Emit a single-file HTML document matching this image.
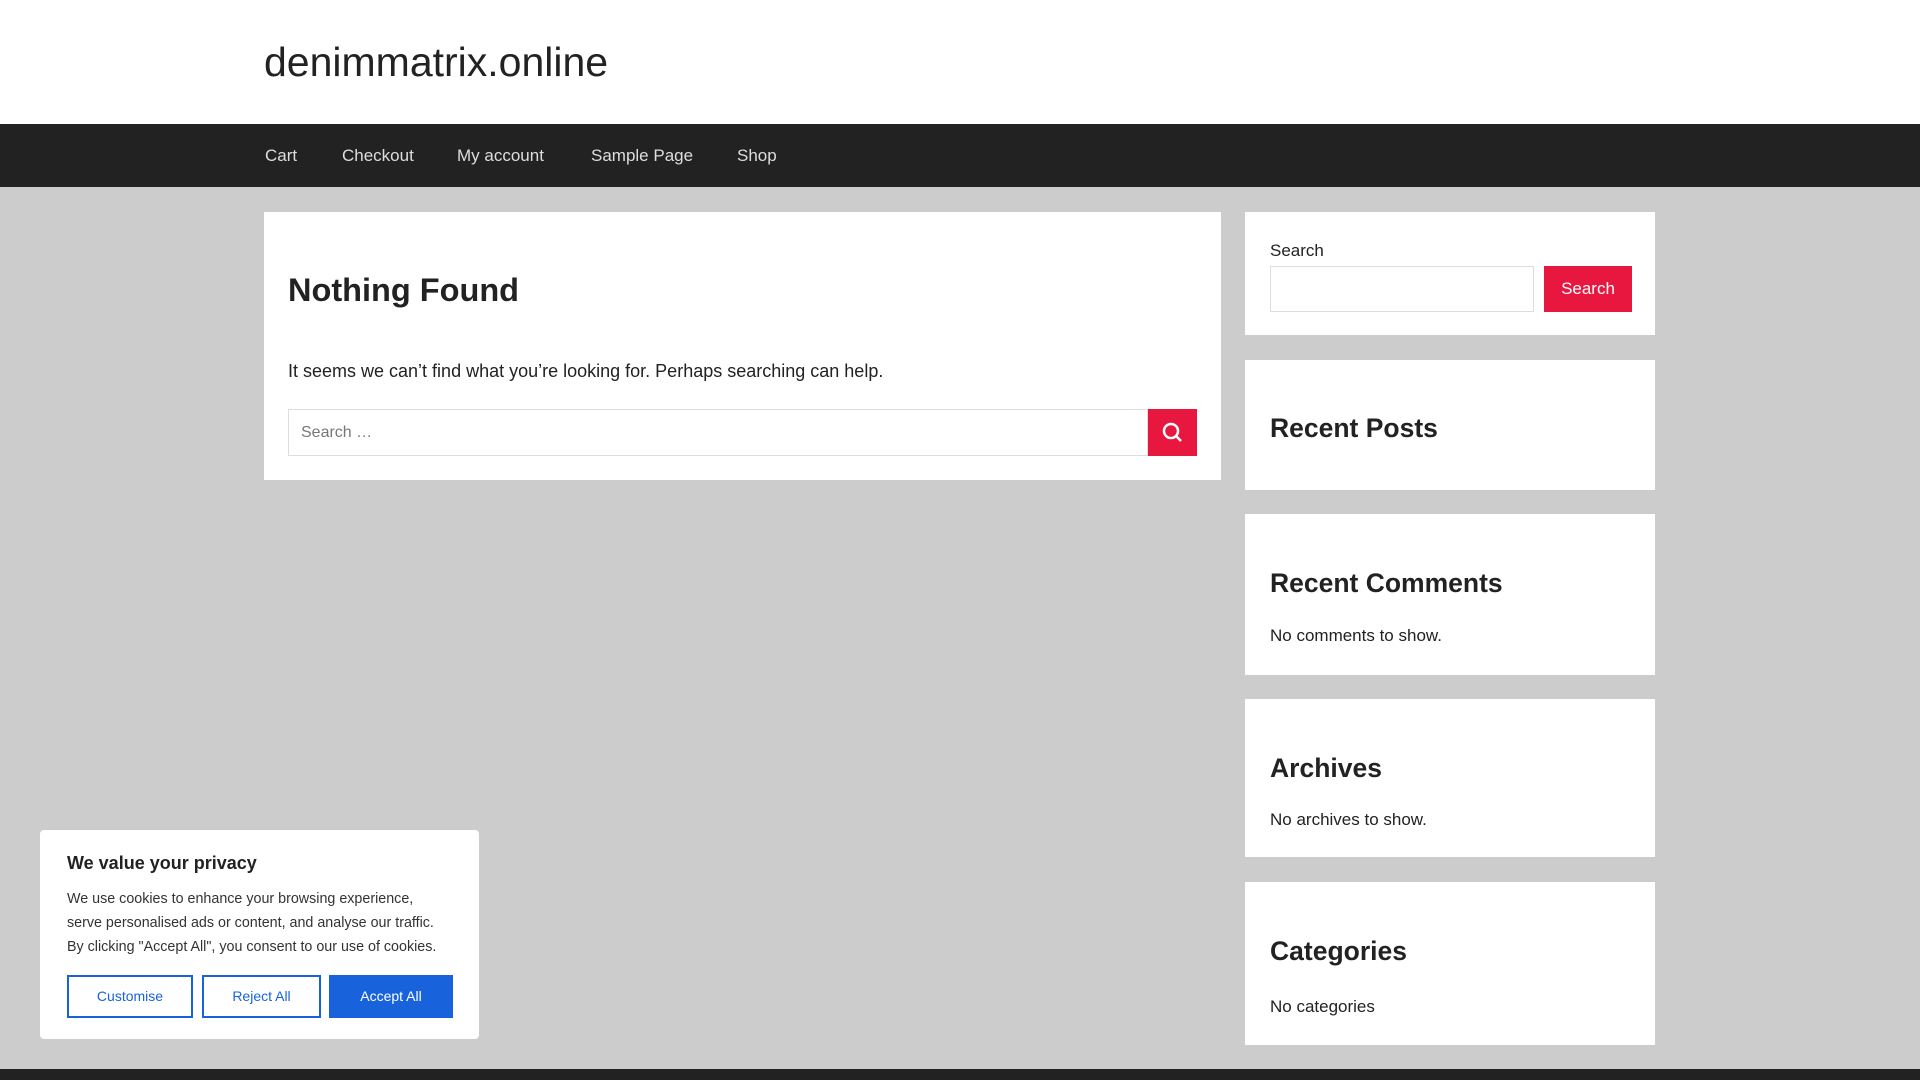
<!DOCTYPE html>
<html><head><meta charset="utf-8"><style>
*{box-sizing:border-box;margin:0;padding:0}
body{width:1920px;height:1080px;overflow:hidden;background:#ccc;font-family:"Liberation Sans",sans-serif;color:#222;position:relative}
.hdr{position:absolute;left:0;top:0;width:1920px;height:124px;background:#fff}
.title{position:absolute;left:264px;top:39px;font-size:41px;color:#222}
.nav{position:absolute;left:0;top:124px;width:1920px;height:63px;background:#222}
.nav span{position:absolute;top:22px;color:#ddd;font-size:17px}
.box{position:absolute;background:#fff}
h1{position:absolute;left:288px;top:272px;font-size:32.5px;font-weight:bold}
.p{position:absolute;font-size:18px}
.inp{position:absolute;border:1px solid #ddd;background:#fff}
.btn{position:absolute;background:#e8173f;color:#fff}
h2{position:absolute;left:1270px;font-size:26.5px;font-weight:bold}
.ck{position:absolute;left:40px;top:830px;width:439px;height:209px;background:#fff;border-radius:4px}
.cb{position:absolute;top:975px;height:43px;border:2px solid #1863dc;color:#1863dc;font-size:14px;text-align:center;line-height:39px}
</style></head><body>
<div class="hdr"><div class="title">denimmatrix.online</div></div>
<div class="nav"><span style="left:265px">Cart</span><span style="left:342px">Checkout</span><span style="left:457px">My account</span><span style="left:591px">Sample Page</span><span style="left:737px">Shop</span></div>
<div class="box" style="left:264px;top:212px;width:957px;height:268px"></div>
<h1>Nothing Found</h1>
<div class="p" style="left:288px;top:361px">It seems we can’t find what you’re looking for. Perhaps searching can help.</div>
<div class="inp" style="left:288px;top:409px;width:860px;height:47px"><span style="position:absolute;left:12px;top:14px;font-size:16px;color:#777">Search …</span></div>
<div class="btn" style="left:1148px;top:409px;width:49px;height:47px"><svg width="49" height="47" viewBox="0 0 49 47"><circle cx="23" cy="22" r="7" fill="none" stroke="#fff" stroke-width="2.5"/><line x1="28" y1="27" x2="33" y2="32" stroke="#fff" stroke-width="2.5"/></svg></div>
<div class="box" style="left:1245px;top:212px;width:410px;height:123px"></div>
<div class="p" style="left:1270px;top:241px;font-size:17px">Search</div>
<div class="inp" style="left:1270px;top:266px;width:264px;height:46px"></div>
<div class="btn" style="left:1544px;top:266px;width:88px;height:46px;font-size:17px;text-align:center;line-height:46px">Search</div>
<div class="box" style="left:1245px;top:360px;width:410px;height:130px"></div>
<h2 style="top:413px">Recent Posts</h2>
<div class="box" style="left:1245px;top:514px;width:410px;height:161px"></div>
<h2 style="top:568px">Recent Comments</h2>
<div class="p" style="left:1270px;top:626px;font-size:17px">No comments to show.</div>
<div class="box" style="left:1245px;top:699px;width:410px;height:158px"></div>
<h2 style="top:753px">Archives</h2>
<div class="p" style="left:1270px;top:810px;font-size:17px">No archives to show.</div>
<div class="box" style="left:1245px;top:882px;width:410px;height:163px"></div>
<h2 style="top:936px">Categories</h2>
<div class="p" style="left:1270px;top:997px;font-size:17px">No categories</div>
<div style="position:absolute;left:0;top:1069px;width:1920px;height:11px;background:#222"></div>
<div class="ck"></div>
<div class="p" style="left:67px;top:853px;font-size:18px;font-weight:bold">We value your privacy</div>
<div class="p" style="left:67px;top:887px;font-size:14.3px;line-height:24px;color:#333">We use cookies to enhance your browsing experience,<br>serve personalised ads or content, and analyse our traffic.<br>By clicking "Accept All", you consent to our use of cookies.</div>
<div class="cb" style="left:67px;width:126px">Customise</div>
<div class="cb" style="left:202px;width:119px">Reject All</div>
<div class="cb" style="left:329px;width:124px;background:#1863dc;color:#fff">Accept All</div>
</body></html>
